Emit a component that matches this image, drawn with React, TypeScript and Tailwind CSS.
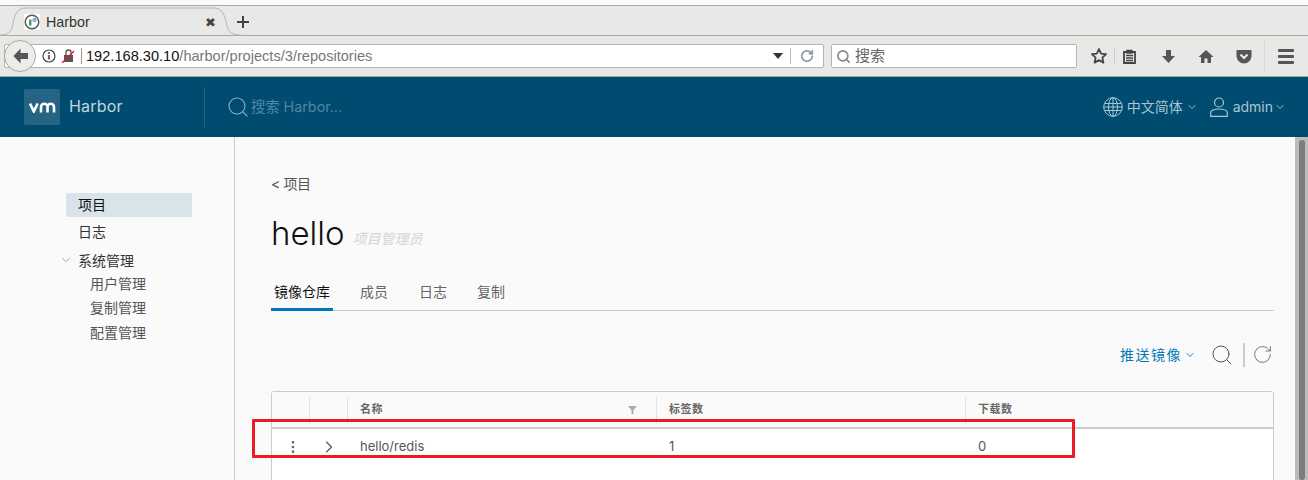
import { ChevronDown, ChevronRight, Search, RotateCw, EllipsisVertical } from 'lucide-react'

const sans = 'font-["Liberation_Sans","Noto_Sans_CJK_SC",sans-serif]'
const ui = 'font-["Inter","Noto_Sans_CJK_SC",sans-serif]'

function BrowserTabs() {
  return (
    <div className="relative mt-[5px] h-[31px] border-t border-b border-[#a9a9a5] bg-[#e8e8e6]">
      {/* tab outline */}
      <svg width="244" height="30" viewBox="0 0 244 30" className="absolute left-0 top-0">
        <path
          d="M0 29C8 29 11 26 12.500 20C14.500 9 17 2 25 2L214 2C222 2 225 9 227 20C228.500 26 232 29 241 29"
          fill="#e8e8e6"
          stroke="#b5b5b2"
        />
      </svg>
      <div className="absolute left-[24px] top-[8px] flex h-[16px] w-[192px] items-center">
        <svg width="16" height="16" viewBox="0 0 16 16" className="bg-white">
          <circle cx="8" cy="8" r="6.800" fill="none" stroke="#555" strokeWidth="1.400" />
          <rect x="5" y="5.500" width="2.500" height="6" fill="#4f9a6a" />
          <circle cx="10.500" cy="6" r="2.200" fill="#7fb6d6" />
        </svg>
        <span className={`ml-[6px] pt-[1px] text-[14.300px] text-[#333] ${sans}`}>Harbor</span>
        <span className="ml-auto text-[13px] leading-none font-bold text-[#444] font-['DejaVu_Sans',sans-serif]">✖</span>
      </div>
      <svg width="14" height="14" viewBox="0 0 14 14" className="absolute left-[236px] top-[9px]">
        <path d="M7 1v12M1 7h12" stroke="#444" strokeWidth="2" />
      </svg>
    </div>
  )
}

function BrowserToolbar() {
  return (
    <div className="flex h-[41px] items-center border-b border-b-[#a9a9a5] bg-[#e8e8e6] pl-[4px] pr-[12px]">
      <div className="relative flex h-[24px] w-[820px] items-center rounded-[2px] border border-[#b4b4b0] bg-white pl-[37px]">
        <div className="absolute -left-px top-[-5px] flex h-[32px] w-[32px] items-center justify-center rounded-full border border-[#a9a9a5] bg-[#ececea]">
          <svg width="15" height="16" viewBox="0 0 15 16">
            <path d="M7.500 0.500 0.500 8l7 7.500V11H15V5H7.500z" fill="#555" />
          </svg>
        </div>
        <svg width="14" height="14" viewBox="0 0 14 14">
          <circle cx="7" cy="7" r="6" fill="none" stroke="#444" strokeWidth="1.200" />
          <path d="M7 6v4.500" stroke="#444" strokeWidth="1.600" />
          <circle cx="7" cy="3.900" r="1" fill="#444" />
        </svg>
        <svg width="14" height="14" viewBox="0 0 14 14" className="ml-[5px]">
          <path d="M3 6h9v7H3z" fill="#555" />
          <path d="M5 6V3.500a2.500 2.500 0 0 1 5 0V6" fill="none" stroke="#555" strokeWidth="1.300" />
          <path d="M1 14 13 2" stroke="#e2202c" strokeWidth="1.400" />
        </svg>
        <div className="ml-[6px] mr-[4px] h-[16px] w-px bg-[#999]" />
        <span className={`pt-[1px] text-[14.600px] text-[#111] ${sans}`}>
          192.168.30.10<span className="text-[#777]">/harbor/projects/3/repositories</span>
        </span>
        <svg width="10" height="6" viewBox="0 0 10 6" className="ml-auto">
          <path d="M0 0h10L5 6z" fill="#333" />
        </svg>
        <div className="ml-[7px] mr-[9px] h-[16px] w-px bg-[#bbb]" />
        <RotateCw size={14} strokeWidth={3} className="mr-[9px] text-[#8a97a8]" />
      </div>
      <div className="ml-[7px] flex h-[24px] w-[246px] items-center rounded-[2px] border border-[#b4b4b0] bg-white pl-[4px]">
        <Search size={15} strokeWidth={2.600} className="text-[#888]" />
        <span className={`ml-[4px] text-[15px] text-[#666] ${sans}`}>搜索</span>
      </div>
      <svg width="18" height="18" viewBox="0 0 18 18" className="ml-[13px]">
        <path d="M9 2l2.100 4.600 5 .6-3.700 3.400 1 5L9 13.100l-4.400 2.500 1-5L1.900 7.200l5-.6z" fill="none" stroke="#444" strokeWidth="1.800" strokeLinejoin="round" />
      </svg>
      <div className="ml-[6px] h-[18px] w-px bg-[#ccc]" />
      <svg width="15" height="15" viewBox="0 0 15 15" className="ml-[7px]">
        <path d="M2 3h11v11H2z" fill="none" stroke="#444" strokeWidth="1.800" />
        <path d="M5 1.500h5V4H5zM4 6.500h7M4 9h7M4 11.500h7" fill="none" stroke="#444" strokeWidth="1.400" />
      </svg>
      <svg width="15" height="15" viewBox="0 0 15 15" className="ml-[24px]">
        <path d="M5 1h5v6h4l-6.500 7L1 7h4z" fill="#555" />
      </svg>
      <svg width="16" height="15" viewBox="0 0 16 15" className="ml-[22px]">
        <path d="M8 1 0.500 8H3v6h3.500V9.500h3V14H13V8h2.500z" fill="#555" />
      </svg>
      <svg width="16" height="15" viewBox="0 0 16 15" className="ml-[22px]">
        <path d="M1 1h14a.5.5 0 0 1 .5.5V7a7.500 7.500 0 0 1-15 0V1.500A.5.5 0 0 1 1 1z" fill="#555" />
        <path d="M4.500 5.500 8 9l3.500-3.500" fill="none" stroke="#e8e8e6" strokeWidth="2" />
      </svg>
      <div className="ml-[12px] h-[30px] w-px bg-[#d8d8d6]" />
      <div className="ml-[13px] flex w-[16px] flex-col gap-[3px]">
        <div className="h-[3px] rounded-[1px] bg-[#555]" />
        <div className="h-[3px] rounded-[1px] bg-[#555]" />
        <div className="h-[3px] rounded-[1px] bg-[#555]" />
      </div>
    </div>
  )
}

function GlobeIcon() {
  return (
    <svg width="20" height="20" viewBox="0 0 20 20" fill="none" stroke="#a9c5d3" strokeWidth="1" className="ml-auto">
      <circle cx="10" cy="10" r="9.300" />
      <ellipse cx="10" cy="10" rx="4.500" ry="9.300" />
      <path d="M10 .7v18.600M1.500 6.500h17M1.500 13.500h17M.7 10h18.600" />
    </svg>
  )
}

function UserIcon() {
  return (
    <svg width="18" height="20" viewBox="0 0 18 20" fill="none" stroke="#a9c5d3" strokeWidth="1.200" className="ml-[12px]">
      <circle cx="9" cy="5.500" r="4.500" />
      <path d="M.7 19.300v-3.800c0-2 3.500-3.500 8.300-3.500s8.300 1.500 8.300 3.500v3.800z" />
    </svg>
  )
}

function AppHeader() {
  return (
    <header className={`flex h-[60px] items-center bg-[#004c70] pl-[24px] pr-[22px] ${ui}`}>
      <div className="flex h-[36px] w-[36px] items-center justify-center rounded-[2px] bg-[#266484]">
        <svg width="27" height="11" viewBox="0 0 27 11">
          <path d="M1 1.500l3.800 8 3.800-8M12 10.500V5a3.250 3.250 0 0 1 6.500 0V10.500M18.500 5a3.250 3.250 0 0 1 6.500 0V10.500" fill="none" stroke="#fff" strokeWidth="2.600" />
        </svg>
      </div>
      <span className="ml-[9px] w-[54px] pb-[2px] text-[16px] tracking-[0.2px] whitespace-nowrap text-[#c5d5de]">Harbor</span>
      <div className="ml-[81px] h-[40px] w-px bg-[#2a6684]" />
      <Search size={24} strokeWidth={1.100} className="ml-[21px] text-[#8fb0c2]" />
      <span className="ml-px text-[14.300px] text-[#4f87a1]">搜索 Harbor...</span>
      <GlobeIcon />
      <span className="ml-[4px] pb-[2px] text-[14px] text-[#a9c5d3]">中文简体</span>
      <ChevronDown size={12} strokeWidth={1.800} className="ml-[3px] text-[#a9c5d3]" />
      <UserIcon />
      <span className="ml-[5px] pb-[2px] text-[14px] text-[#a9c5d3]">admin</span>
      <ChevronDown size={12} strokeWidth={1.800} className="ml-[1px] text-[#a9c5d3]" />
    </header>
  )
}

function Sidebar() {
  return (
    <aside className={`w-[235px] shrink-0 border-r border-r-[#ccc] pt-[56px] text-[14px] text-[#333] ${ui}`}>
      <div className="ml-[66px] flex h-[24px] w-[126px] items-center rounded-l-[2px] bg-[#d9e4ea] pb-[2px] pl-[12px] text-[#111]">项目</div>
      <div className="ml-[78px] mt-[3px] flex h-[24px] items-center pb-[2px]">日志</div>
      <div className="ml-[59px] mt-[4px] flex h-[24px] items-center">
        <ChevronDown size={14} strokeWidth={1.500} className="text-[#999]" />
        <span className="ml-[5px]">系统管理</span>
      </div>
      <div className="ml-[90px] flex flex-col text-[#555]">
        <div className="flex h-[24.500px] items-center pb-[2px]">用户管理</div>
        <div className="flex h-[24.500px] items-center pb-[2px]">复制管理</div>
        <div className="flex h-[24.500px] items-center pb-[2px]">配置管理</div>
      </div>
    </aside>
  )
}

function RepoTable() {
  return (
    <div className="mt-[23px] overflow-hidden rounded-t-[3px] border border-[#ccc] bg-white text-[#565656]">
      <div className="flex h-[37px] border-b-[2px] border-b-[#ccc] bg-[#fafafa] pt-[5px] text-[11px] font-semibold tracking-[0.5px] text-[#666]">
        <div className="h-[26px] w-[38px] border-r border-r-[#e2e2e2]" />
        <div className="h-[26px] w-[38px] border-r border-r-[#e2e2e2]" />
        <div className="flex h-[26px] w-[309px] items-center border-r border-r-[#e2e2e2] pb-[1px] pl-[12px] pr-[19px]">
          名称
          <svg width="9" height="8" viewBox="0 0 9 8" className="ml-auto mt-[1px]">
            <path d="M0 0h9L5.500 4v4h-2V4z" fill="#aaa" />
          </svg>
        </div>
        <div className="flex h-[26px] w-[309px] items-center border-r border-r-[#e2e2e2] pb-[1px] pl-[12px]">标签数</div>
        <div className="flex h-[26px] items-center pb-[1px] pl-[12px]">下载数</div>
      </div>
      <div className="flex h-[52px] pt-[6px] text-[13px]">
        <div className="flex h-[24px] w-[38px] items-center justify-center pl-[4px]">
          <EllipsisVertical size={16} strokeWidth={2} className="text-[#666]" />
        </div>
        <div className="flex h-[24px] w-[38px] items-center justify-center">
          <ChevronRight size={20} strokeWidth={1.400} className="text-[#555]" />
        </div>
        <div className="flex h-[24px] w-[309px] items-center pl-[12px]">hello/redis</div>
        <div className="flex h-[24px] w-[309px] items-center pl-[12px]">1</div>
        <div className="flex h-[24px] items-center pl-[12px]">0</div>
      </div>
    </div>
  )
}

function Content() {
  return (
    <main className={`min-w-0 flex-1 pl-[36px] pr-[21px] pt-[39px] ${ui}`}>
      <div className="h-[18px] text-[14px] leading-[16px] tracking-[-0.4px] text-[#555]">&lt; 项目</div>
      <div className="mt-[15px] flex h-[48px] items-end">
        <span className="text-[33px] leading-[48px] font-light text-[#111]">hello</span>
        <span className="mb-[8px] ml-[8px] text-[14px] italic text-[#d5d5d5]">项目管理员</span>
      </div>
      <nav className="mt-[18px] flex h-[36px] border-b border-b-[#ccc] text-[14px] text-[#666]">
        <div className="flex h-[36px] w-[62px] items-center justify-center border-b-[3px] border-b-[#0079b8] pb-[1px] text-[#111]">镜像仓库</div>
        <div className="ml-[27px] flex h-[35px] items-center pb-[2px]">成员</div>
        <div className="ml-[31px] flex h-[35px] items-center pb-[2px]">日志</div>
        <div className="ml-[30px] flex h-[35px] items-center pb-[2px]">复制</div>
      </nav>
      <div className="mt-[30px] flex h-[27px] items-center justify-end pr-px">
        <span className="text-[14px] tracking-[1.500px] text-[#0079b8]">推送镜像</span>
        <ChevronDown size={12} strokeWidth={1.800} className="ml-[2px] text-[#0079b8]" />
        <Search size={24} strokeWidth={1} className="ml-[14px] text-[#555]" />
        <div className="ml-[9px] h-[24px] w-[2px] bg-[#ccc]" />
        <RotateCw size={21} strokeWidth={1} className="ml-[7px] text-[#666]" />
      </div>
      <RepoTable />
    </main>
  )
}

export default function App() {
  return (
    <div className="relative h-[480px] w-[1308px] overflow-hidden bg-[#fafafa]">
      <BrowserTabs />
      <BrowserToolbar />
      <AppHeader />
      <div className="flex h-[343px]">
        <Sidebar />
        <Content />
        <div className="w-[13px] shrink-0 bg-[#bcbcbc] pl-[4px] pt-[3px]">
          <div className="h-full w-[6px] rounded-full bg-[#7b7d7d]" />
        </div>
      </div>
      {/* annotation drawn over the screenshot */}
      <div className="pointer-events-none absolute left-[252px] top-[419px] h-[39px] w-[823px] rounded-[1px] border-[3px] border-[#ed1c24]" />
    </div>
  )
}
